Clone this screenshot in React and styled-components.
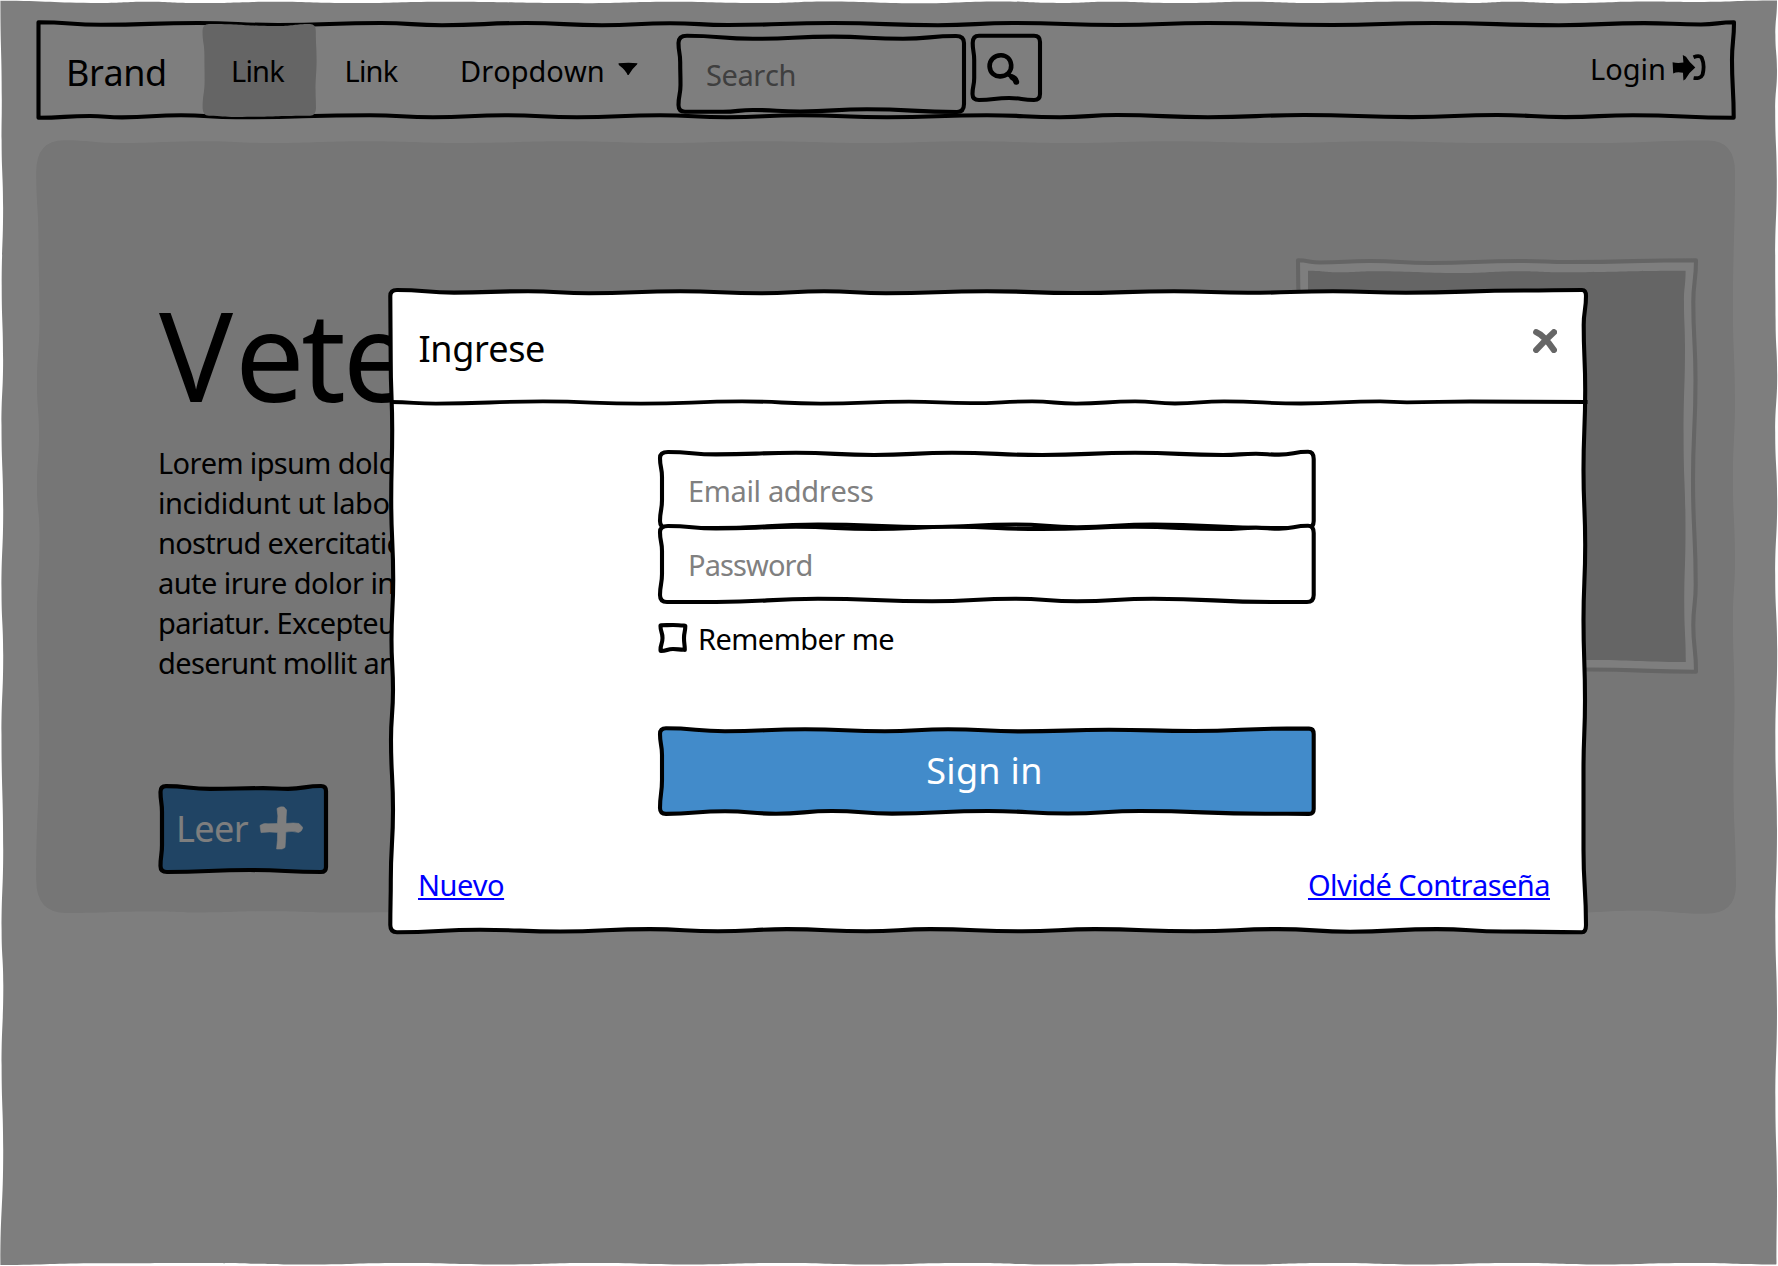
import React from 'react';
import styled, { createGlobalStyle } from 'styled-components';

const GlobalStyle = createGlobalStyle`
  html, body { margin: 0; padding: 0; background: #fff; }
  *, *::before, *::after { box-sizing: border-box; }
  body {
    font-family: "Noto Sans", "Open Sans", sans-serif;
    font-size: 29px;
    font-kerning: none;
    color: #000;
    overflow: hidden;
  }
`;

/* ---------- hand-drawn outlines ---------- */

// Each edge is a list of wave crests and troughs in screen coordinates,
// clockwise from the top left; rounded corners join one edge to the next.
const wave = (points, vertical) =>
  points
    .slice(1)
    .map(([x, y], i) => {
      const [px, py] = points[i];
      if (vertical) {
        const m = (py + y) / 2;
        return `C${px} ${m} ${x} ${m} ${x} ${y}`;
      }
      const m = (px + x) / 2;
      return `C${m} ${py} ${m} ${y} ${x} ${y}`;
    })
    .join('');

const outline = ({ top, right, bottom, left }) => {
  const end = (e) => e[e.length - 1];
  const tl = `${end(left)[0]} ${top[0][1]}`;
  return (
    `M${top[0].join(' ')}${wave(top)}` +
    `Q${right[0][0]} ${end(top)[1]} ${right[0].join(' ')}${wave(right, true)}` +
    `Q${end(right)[0]} ${bottom[0][1]} ${bottom[0].join(' ')}${wave(bottom)}` +
    `Q${left[0][0]} ${end(bottom)[1]} ${left[0].join(' ')}${wave(left, true)}` +
    `Q${tl} ${top[0].join(' ')}Z`
  );
};

const shapes = {
  page: outline({
    top: [[0, 0.8], [100, 3], [147, 1.8], [198, 3.1], [274, 1.8], [353, 3.1], [442, 1.7], [585, 3.2], [670, 1.8], [763, 3.1], [827, 1.5], [917, 3.2], [1000, 1.4], [1057, 3], [1110, 1.7], [1180, 3], [1250, 1.7], [1315, 3], [1410, 1.6], [1474, 3], [1510, 1.8], [1566, 3.2], [1650, 1.6], [1690, 2], [1777, 0.5]],
    right: [[1777, 1], [1775.4, 35], [1777, 70], [1775.2, 110], [1776.8, 180], [1775.2, 260], [1775.6, 320], [1777.2, 375], [1775.2, 432], [1777.2, 500], [1775.2, 575], [1777.2, 650], [1775.4, 740], [1777, 830], [1775.4, 925], [1777, 1010], [1775.4, 1100], [1777, 1190], [1776.5, 1263]],
    bottom: [[1776, 1264.5], [1690, 1263], [1600, 1264.5], [1510, 1263], [1420, 1264.5], [1330, 1263], [1240, 1264.5], [1150, 1263], [1060, 1264.5], [960, 1263], [870, 1264.5], [780, 1263], [690, 1264.5], [590, 1263], [500, 1264.5], [400, 1263], [310, 1264.5], [200, 1263], [100, 1263.3], [0, 1265]],
    left: [[0.4, 1265], [3.2, 1150], [1.6, 1065], [3.3, 985], [1.6, 930], [3.2, 850], [1.5, 735], [3.2, 655], [1.5, 590], [3.2, 510], [1.5, 425], [3.1, 360], [1.7, 285], [3.1, 208], [1.6, 140], [1.8, 100], [0.4, 1]],
  }),
  navbar: outline({
    top: [[38.5, 22.3], [101, 24.7], [198, 23], [278, 25], [381, 23], [442, 25.2], [526, 23], [602, 25.2], [670, 23.2], [728, 25], [833, 23], [938, 25.3], [1013, 23], [1117, 25], [1208, 23], [1332, 25], [1434, 23], [1559, 25.2], [1644, 23.1], [1701, 24.5], [1734, 22.3]],
    right: [[1734, 22.5], [1732, 60], [1733.7, 117.5]],
    bottom: [[1733.5, 117.8], [1633, 115.2], [1565, 117.1], [1497, 115], [1412, 117.1], [1304, 115], [1208, 117.3], [1117, 115], [1060, 117.2], [987, 115.2], [887, 117.3], [800, 115.3], [727, 117.3], [660, 115.2], [577, 117.3], [505, 115.2], [433, 117.3], [370, 115.2], [236, 117.3], [181, 115.2], [122, 117.4], [90, 116], [38.5, 117.8]],
    left: [[38.5, 117.5], [38.5, 22.5]],
  }),
  activeLink: outline({
    top: [[209, 24], [278, 26], [310, 24]],
    right: [[315.8, 31], [316.6, 60], [315.6, 90], [316, 108]],
    bottom: [[310, 115.7], [236, 117], [209, 115.7]],
    left: [[202.6, 108], [204.6, 80], [204.4, 55], [202.5, 31]],
  }),
  searchInput: outline({
    top: [[687, 35.8], [753, 38.8], [833, 36.6], [903, 38.8], [956, 36]],
    right: [[964, 43], [964, 104]],
    bottom: [[957, 112], [867, 109.3], [800, 111.5], [753, 110], [723, 111.7], [685, 111.7]],
    left: [[678.5, 105], [680.5, 85], [680.2, 62], [678.5, 43]],
  }),
  searchButton: outline({
    top: [[979, 35.8], [1034, 35.8]],
    right: [[1040, 42], [1040, 94]],
    bottom: [[1034, 100], [1009, 98], [979, 100]],
    left: [[972.5, 94], [974.2, 78], [974.2, 60], [972.7, 43]],
  }),
  hero: outline({
    top: [[64, 140.3], [118, 143], [206, 141.3], [270, 143], [366, 141.3], [463, 143], [568, 141.3], [665, 143], [760, 141.3], [870, 143], [970, 141.3], [1070, 143], [1170, 141.3], [1280, 143], [1380, 141.3], [1490, 143], [1590, 143], [1708, 140.5]],
    right: [[1735, 172], [1733, 310], [1735, 400], [1733, 480], [1735, 560], [1733, 620], [1734.5, 700], [1733.5, 780], [1736, 885]],
    bottom: [[1706, 913.8], [1640, 910.7], [1560, 913], [1440, 911], [1300, 913], [1100, 911], [900, 913], [700, 911], [480, 911.2], [330, 912.5], [268, 911.3], [200, 912.5], [150, 911.5], [66, 913]],
    left: [[36.2, 880], [39.3, 740], [37, 620], [39.5, 535], [37, 487], [39, 433], [37, 385], [39.5, 318], [38.5, 241], [36.2, 172]],
  }),
  photo: outline({
    top: [[1298, 260.3], [1320, 262.5], [1370, 261], [1430, 263], [1520, 261], [1570, 262], [1696, 260.3]],
    right: [[1696, 260.3], [1693.3, 302], [1695.5, 380], [1693, 480], [1695.7, 585], [1693.3, 625], [1696, 671.5]],
    bottom: [[1696, 671.7], [1590, 669.5], [1500, 671], [1400, 669], [1298, 671.7]],
    left: [[1298, 671.7], [1300, 570], [1298, 450], [1300, 360], [1298, 260.5]],
  }),
  photoInner: outline({
    top: [[1308, 270.7], [1340, 272.3], [1375, 271.3], [1460, 273], [1520, 271.3], [1560, 272.3], [1685.6, 270.8]],
    right: [[1685.6, 271], [1684, 302], [1685, 345], [1683.6, 435], [1685.5, 530], [1684.3, 605], [1685.8, 661.5]],
    bottom: [[1685.8, 662], [1586, 660], [1480, 661], [1308, 662]],
    left: [[1308, 662], [1309, 450], [1308, 271]],
  }),
  readMore: outline({
    top: [[166, 786.2], [210, 788.8], [263, 788.2], [288, 788.8], [321, 786]],
    right: [[326, 791], [326, 867]],
    bottom: [[321, 872], [250, 870], [167, 872]],
    left: [[160.5, 866], [162, 845], [162, 812], [160.5, 792]],
  }),
  modal: outline({
    top: [[397, 290], [454, 292.6], [528, 291.2], [589, 293.3], [680, 291.2], [761, 293.2], [824, 291.2], [886, 293.2], [987, 291.2], [1076, 293], [1174, 291.2], [1248, 292.8], [1333, 291.2], [1406, 292.8], [1524, 290.5], [1582, 290]],
    right: [[1586, 296], [1583.7, 325], [1585.2, 390], [1583.5, 470], [1585.2, 545], [1583.5, 620], [1585, 700], [1583.5, 770], [1583.5, 850], [1586, 925]],
    bottom: [[1582, 932.2], [1503, 931.5], [1437, 929.1], [1350, 931.7], [1278, 929.1], [1194, 931.3], [1095, 929.1], [1022, 931.3], [930, 929.1], [867, 931.3], [787, 929.1], [718, 931.3], [650, 929.1], [560, 931.5], [480, 929.8], [397, 932.2]],
    left: [[390.3, 925], [390.8, 880], [393, 810], [391, 740], [393, 690], [391.5, 640], [393.2, 580], [391.2, 500], [392.2, 430], [390.7, 360], [390.3, 296]],
  }),
  email: outline({
    top: [[668, 452], [716, 454.4], [796, 452.8], [874, 455], [952, 452.8], [1042, 455], [1135, 452.8], [1223, 455], [1256, 453.8], [1279, 454.6], [1308, 451.8]],
    right: [[1313.7, 459], [1313.7, 521]],
    bottom: [[1307, 528], [1274, 528], [1153, 524.5], [1077, 527.3], [1015, 524.5], [932, 527.3], [818, 524.5], [716, 528], [667, 528]],
    left: [[660, 521], [662, 500], [662, 477], [660, 458]],
  }),
  password: outline({
    top: [[668, 526], [716, 528.4], [796, 526.8], [874, 529], [952, 526.8], [1042, 529], [1135, 526.8], [1223, 529], [1256, 527.8], [1279, 528.6], [1308, 525.8]],
    right: [[1313.7, 533], [1313.7, 595]],
    bottom: [[1307, 602], [1274, 602], [1153, 598.7], [1077, 601.3], [1015, 598.7], [932, 601.3], [818, 598.7], [716, 602], [667, 602]],
    left: [[660, 595], [662, 574], [662, 551], [660, 532]],
  }),
  checkbox: outline({
    top: [[661, 625.3], [673, 625], [684, 625.5]],
    right: [[685.3, 626], [684, 638], [684.8, 650]],
    bottom: [[684, 649.8], [673, 649], [661, 651]],
    left: [[660.5, 650], [662.5, 638], [660.5, 626]],
  }),
  signIn: outline({
    top: [[666, 728.3], [725, 731.2], [805, 729.2], [885, 731.3], [948, 729.2], [1020, 731.4], [1109, 729.8], [1194, 731], [1287, 728.6], [1309, 728.6]],
    right: [[1313.7, 734], [1313.7, 809]],
    bottom: [[1309, 813.9], [1265, 813.7], [1140, 811], [1068, 813.5], [988, 811], [892, 813.6], [832, 811], [776, 813.7], [725, 811.2], [666, 813.9]],
    left: [[660, 808], [662, 780], [662, 755], [660, 734]],
  }),
};

const divider = `M391 402${wave([[391, 402], [436, 403.6], [543, 401.4], [641, 403.7], [742, 401.4], [821, 403.6], [909, 401.6], [971, 403.2], [1032, 401.4], [1076, 403.6], [1135, 401.4], [1175, 403.5], [1224, 401.4], [1301, 403.5], [1380, 401.4], [1407, 402.3], [1470, 401.5], [1587.5, 402]])}`;

const Drawing = styled.svg`
  position: absolute;
  inset: 0;
  width: 100%;
  height: 100%;
  overflow: visible;
  pointer-events: none;
`;

function Sketch({ box, d, fill = 'none', stroke = '#000', weight = 4.1, children }) {
  return (
    <Drawing viewBox={box.join(' ')} aria-hidden="true">
      <path d={d} fill={fill} stroke={stroke} strokeWidth={weight} strokeLinejoin="round" />
      {children}
    </Drawing>
  );
}

/* ---------- layout ---------- */

const Screen = styled.div`
  position: relative;
  width: 1778px;
  height: 1266px;
  overflow: hidden;
  background: #fff;
  padding: 22px 43px 0 38px;
`;

const Text = styled.span`
  position: relative;
  display: block;
  white-space: pre;
  font-size: ${(p) => p.$size || 29}px;
  line-height: ${(p) => p.$line || 40}px;
  letter-spacing: ${(p) => p.$track || 0}px;
  color: ${(p) => p.$color || 'inherit'};
`;

const Navbar = styled.nav`
  position: relative;
  display: flex;
  align-items: flex-start;
  width: 1696px;
  height: 96px;
`;

const Brand = styled.div`
  width: 165px;
  padding-left: 28px;
`;

const NavItem = styled.div`
  position: relative;
  display: flex;
  width: ${(p) => p.$width}px;
  height: 96px;
  padding-left: ${(p) => p.$start}px;
`;

const CaretIcon = styled.svg`
  position: relative;
  width: 20px;
  height: 13px;
  margin: 40px 0 0 13px;
`;

const SearchBox = styled.div`
  position: relative;
  width: 285px;
  height: 76px;
  margin-top: 14px;
  padding-left: 27px;
`;

const SearchButton = styled.div`
  position: relative;
  display: flex;
  width: 68px;
  height: 64px;
  margin: 14px 0 0 8px;
  padding: 16px 0 0 14px;
`;

const SearchIcon = styled.svg`
  position: relative;
  width: 34px;
  height: 34px;
`;

const Login = styled.div`
  display: flex;
  margin-left: auto;
  padding-right: 28px;
`;

const LoginIcon = styled.svg`
  position: relative;
  width: 34px;
  height: 28px;
  margin: 32px 0 0 6px;
`;

const Hero = styled.section`
  position: relative;
  display: flex;
  width: 1698px;
  height: 773px;
  margin: 22px 0 0 -1px;
`;

const HeroCopy = styled.div`
  display: flex;
  flex-direction: column;
  padding: 139px 0 0 121px;
`;

const Title = styled.h1`
  position: relative;
  margin: 0;
  padding-left: 1px;
  font-size: 123.5px;
  font-weight: 400;
  line-height: 150px;
  letter-spacing: -3.2px;
`;

const Initial = styled.span`
  letter-spacing: 1.8px;
`;

const Paragraph = styled.div`
  padding-top: 14px;
`;

const ReadMore = styled.div`
  position: relative;
  display: flex;
  width: 165px;
  height: 86px;
  margin: 103px 0 0 3px;
  padding-left: 15px;
`;

const PlusIcon = styled.svg`
  position: relative;
  width: 44px;
  height: 44px;
  margin: 20px 0 0 11px;
`;

const Photo = styled.div`
  position: relative;
  width: 398px;
  height: 412px;
  margin: 120px 39px 0 auto;
`;

const Backdrop = styled.div`
  position: absolute;
  inset: 0;
`;

const Modal = styled.div`
  position: absolute;
  left: 391px;
  top: 291px;
  width: 1194px;
  height: 641px;
  display: flex;
  flex-direction: column;
`;

const ModalHeader = styled.header`
  position: relative;
  display: flex;
  justify-content: space-between;
  height: 111px;
  padding: 0 28px 0 27.5px;
`;

const CloseIcon = styled.svg`
  width: 24px;
  height: 24px;
  margin-top: 38px;
`;

const Form = styled.div`
  width: 654px;
  margin: 51px 0 0 269px;
`;

const Field = styled.div`
  position: relative;
  height: 74px;
  padding-left: 28px;
`;

const CheckRow = styled.div`
  display: flex;
  height: 27px;
  margin-top: 24px;
`;

const Checkbox = styled.div`
  position: relative;
  width: 25px;
  height: 26px;
  margin-right: 13px;
`;

const SignIn = styled.div`
  position: relative;
  display: flex;
  justify-content: center;
  height: 85px;
  margin-top: 77px;
  padding-right: 5px;
`;

const Links = styled.div`
  position: relative;
  display: flex;
  justify-content: space-between;
  margin-top: 51px;
  padding: 0 35px 0 27px;
`;

const Link = styled.a`
  color: #0000ff;
  line-height: 40px;
  letter-spacing: ${(p) => p.$track}px;
  text-decoration: underline;
  text-decoration-thickness: 2px;
  text-decoration-skip-ink: none;
  text-underline-offset: 2px;
`;

const heroLines = [
  ['Lorem ipsum dolor', -0.65],
  ['incididunt ut labore', -0.4],
  ['nostrud exercitation', -0.7],
  ['aute irure dolor in', -0.55],
  ['pariatur. Excepteur', -0.7],
  ['deserunt mollit anim', -0.62],
];

export default function App() {
  return (
    <>
      <GlobalStyle />
      <Screen>
        <Navbar>
          <Sketch box={[38, 22, 1696, 96]} d={shapes.navbar} fill="#fff" />
          <Brand>
            <Text $size={36} $line={102} $track={-0.4}>Brand</Text>
          </Brand>
          <NavItem $width={113} $start={28}>
            <Sketch box={[203, 22, 113, 96]} d={shapes.activeLink} fill="#ccc" stroke="none" />
            <Text $line={97} $track={-0.8}>Link</Text>
          </NavItem>
          <NavItem $width={114} $start={28.5}>
            <Text $line={97} $track={-0.8}>Link</Text>
          </NavItem>
          <NavItem $width={249} $start={30}>
            <Text $line={97}>Dropdown</Text>
            <CaretIcon viewBox="0 0 20 13">
              <path d="M0.5 1.3Q10 0.2 19.5 1.2L19 2.6Q14 7 10.6 13H9.6Q7.5 8 0.8 3Z" />
            </CaretIcon>
          </NavItem>
          <SearchBox>
            <Sketch box={[679, 36, 285, 76]} d={shapes.searchInput} fill="#fff" />
            <Text $line={78} $color="#808080" $track={-0.4}>Search</Text>
          </SearchBox>
          <SearchButton>
            <Sketch box={[972, 36, 68, 64]} d={shapes.searchButton} fill="#fff" />
            <SearchIcon viewBox="0 0 34 34" fill="none" stroke="#000" strokeLinecap="round">
              <path d="M15.2 3.2C8 3 3.2 8.5 3.6 14.5C4 21 9 24.7 14.5 24.4C21 24 25.6 19.5 25.2 13C24.6 7 20.5 3.4 15.2 3.2Z" strokeWidth="4.6" />
              <path d="M22.5 22.5L27 25.6" strokeWidth="4.2" />
              <path d="M26.5 25.4C28.5 26.4 29.8 28 30.2 29.8" strokeWidth="6" />
            </SearchIcon>
          </SearchButton>
          <Login>
            <Text $line={93}>Login</Text>
            <LoginIcon viewBox="0 0 34 28">
              <path d="M0.6 8.2Q5 9.6 11.4 8.6L10.8 1L14 2.8Q17 8 23.3 13.6Q17 18.5 13.4 25.3L11.4 26.6L11 18.8Q5 17.4 1.2 19.4Z" />
              <path d="M21.5 3.2C25 1.7 28.4 2 29.7 3.7C31.6 8 32 15 30.6 20.5C29.3 23.6 25.4 24.7 21.6 24" fill="none" stroke="#000" strokeWidth="3.8" />
            </LoginIcon>
          </Login>
        </Navbar>

        <Hero>
          <Sketch box={[37, 140, 1698, 773]} d={shapes.hero} fill="#eee" stroke="none" />
          <HeroCopy>
            <Title><Initial>V</Initial>ete</Title>
            <Paragraph>
              {heroLines.map(([line, track]) => (
                <Text key={line} $track={track}>{line}</Text>
              ))}
            </Paragraph>
            <ReadMore>
              <Sketch box={[161, 786, 165, 86]} d={shapes.readMore} fill="#428bca" weight={4.2} />
              <Text $size={36} $line={85} $track={-0.6} $color="#fff">Leer</Text>
              <PlusIcon viewBox="0 0 44 44">
                <path
                  d="M18 2.5Q21 0 25 1L27.6 4Q27 11 27 17.5Q35 16.5 40 17.5L43.8 21.5Q43 25.5 39.5 26.5Q33 24.5 26.8 26Q26.6 35 26 41.5L23 43L17.6 43Q18.8 34 18.6 26.4Q10 25.3 2 26.6L1 19.5Q5 16.5 9 17.8L18.4 17.6Q19.6 10 18 2.5Z"
                  fill="#fff"
                  stroke="#fff"
                  strokeWidth="0.6"
                />
              </PlusIcon>
            </ReadMore>
          </HeroCopy>
          <Photo>
            <Sketch box={[1298, 260, 398, 412]} d={shapes.photo} fill="#fff" stroke="#ccc">
              <path d={shapes.photoInner} fill="#ccc" />
            </Sketch>
          </Photo>
        </Hero>

        <Backdrop>
          <Sketch box={[0, 0, 1778, 1266]} d={shapes.page} fill="rgba(0,0,0,0.505)" stroke="none" />
        </Backdrop>

        <Modal>
          <Sketch box={[391, 291, 1194, 641]} d={shapes.modal} fill="#fff">
            <path d={divider} fill="none" stroke="#000" strokeWidth="3.8" />
          </Sketch>
          <ModalHeader>
            <Text $size={36} $line={116} $track={-0.4}>Ingrese</Text>
            <CloseIcon viewBox="0 0 24 24" fill="none" stroke="#666" strokeWidth="6.2" strokeLinecap="round">
              <path d="M3.2 3.2C9 5.5 14 11 20.9 21M20.9 3.2C14 9.5 9 14.5 3.2 21" />
            </CloseIcon>
          </ModalHeader>
          <Form>
            <Field>
              <Sketch box={[660, 453, 654, 74]} d={shapes.email} fill="#fff" />
              <Text $line={75} $track={-0.35} $color="#808080">Email address</Text>
            </Field>
            <Field>
              <Sketch box={[660, 527, 654, 74]} d={shapes.password} fill="#fff" />
              <Text $line={75} $track={-0.9} $color="#808080">Password</Text>
            </Field>
            <CheckRow>
              <Checkbox>
                <Sketch box={[660, 625, 25, 26]} d={shapes.checkbox} fill="#fff" />
              </Checkbox>
              <Text $line={28} $track={-0.55}>Remember me</Text>
            </CheckRow>
            <SignIn>
              <Sketch box={[660, 729, 654, 85]} d={shapes.signIn} fill="#428bca" />
              <Text $size={36} $line={83} $track={0.3} $color="#fff">Sign in</Text>
            </SignIn>
          </Form>
          <Links>
            <Link $track={-0.5}>Nuevo</Link>
            <Link $track={-0.53}>Olvidé Contraseña</Link>
          </Links>
        </Modal>
      </Screen>
    </>
  );
}
